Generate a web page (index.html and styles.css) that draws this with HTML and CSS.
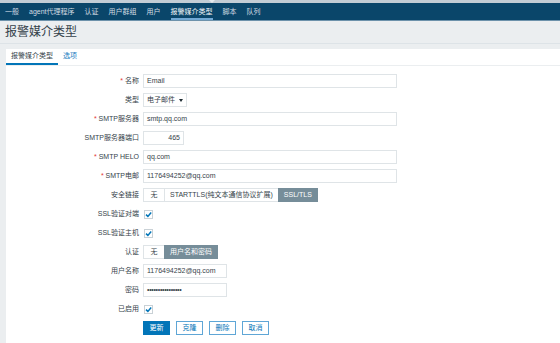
FILE: index.html
```html
<!DOCTYPE html>
<html lang="zh">
<head>
<meta charset="utf-8">
<link rel="stylesheet" href="styles.css">
</head>
<body>
<div class="topband"><span class="notch"></span></div>
<nav class="subnav">
  <span class="nav-item">一般</span>
  <span class="nav-item">agent代理程序</span>
  <span class="nav-item">认证</span>
  <span class="nav-item">用户群组</span>
  <span class="nav-item">用户</span>
  <span class="nav-item selected">报警媒介类型</span>
  <span class="nav-item">脚本</span>
  <span class="nav-item">队列</span>
</nav>
<header class="page-header"><h1 class="page-title">报警媒介类型</h1></header>
<main class="panel">
  <div class="tabs">
    <span class="tab active">报警媒介类型</span>
    <span class="tab">选项</span>
  </div>
  <div class="form">
    <div class="lbl"><span class="req">*</span> 名称</div>
    <div class="field"><div class="inp wide">Email</div></div>

    <div class="lbl">类型</div>
    <div class="field"><div class="inp select">电子邮件<span class="caret"></span></div></div>

    <div class="lbl"><span class="req">*</span> SMTP服务器</div>
    <div class="field"><div class="inp wide">smtp.qq.com</div></div>

    <div class="lbl">SMTP服务器端口</div>
    <div class="field"><div class="inp port">465</div></div>

    <div class="lbl"><span class="req">*</span> SMTP HELO</div>
    <div class="field"><div class="inp wide">qq.com</div></div>

    <div class="lbl"><span class="req">*</span> SMTP电邮</div>
    <div class="field"><div class="inp wide">1176494252@qq.com</div></div>

    <div class="lbl">安全链接</div>
    <div class="field"><div class="seg"><span class="seg-btn narrow">无</span><span class="seg-btn">STARTTLS(纯文本通信协议扩展)</span><span class="seg-btn on">SSL/TLS</span></div></div>

    <div class="lbl">SSL验证对端</div>
    <div class="field"><span class="chk"><svg viewBox="0 0 9 9" width="9" height="9"><polyline points="2,4.6 3.9,6.4 7.2,2.6" fill="none" stroke="#0275b8" stroke-width="1.5"/></svg></span></div>

    <div class="lbl">SSL验证主机</div>
    <div class="field"><span class="chk"><svg viewBox="0 0 9 9" width="9" height="9"><polyline points="2,4.6 3.9,6.4 7.2,2.6" fill="none" stroke="#0275b8" stroke-width="1.5"/></svg></span></div>

    <div class="lbl">认证</div>
    <div class="field"><div class="seg"><span class="seg-btn narrow">无</span><span class="seg-btn on">用户名和密码</span></div></div>

    <div class="lbl">用户名称</div>
    <div class="field"><div class="inp short">1176494252@qq.com</div></div>

    <div class="lbl">密码</div>
    <div class="field"><div class="inp short pw">••••••••••••••••</div></div>

    <div class="lbl">已启用</div>
    <div class="field"><span class="chk"><svg viewBox="0 0 9 9" width="9" height="9"><polyline points="2,4.6 3.9,6.4 7.2,2.6" fill="none" stroke="#0275b8" stroke-width="1.5"/></svg></span></div>

    <div class="lbl"></div>
    <div class="field buttons">
      <span class="btn primary">更新</span>
      <span class="btn">克隆</span>
      <span class="btn">删除</span>
      <span class="btn">取消</span>
    </div>
  </div>
</main>
</body>
</html>
```

FILE: styles.css
```css
* { box-sizing: border-box; }
html, body {
  margin: 0;
  padding: 0;
  background: #ebeef0;
  font-family: "Liberation Sans", "Noto Sans CJK SC", sans-serif;
  color: #36434a;
  font-size: 7px;
  overflow: hidden;
}
.topband {
  height: 3px;
  background: #c3cdd5;
  position: relative;
}
.notch {
  position: absolute;
  left: 209px;
  top: 0;
  width: 0;
  height: 0;
  border-left: 3px solid transparent;
  border-right: 3px solid transparent;
  border-top: 3px solid #e6ebee;
}
.subnav {
  display: flex;
  height: 18px;
  background: #0a466a;
  border-bottom: 1px solid #6d92ab;
}
.nav-item {
  margin: 0 5px;
  height: 17px;
  line-height: 17px;
  color: #d3dce2;
  white-space: nowrap;
}
.nav-item.selected {
  color: #f4f7f9;
  border-bottom: 2px solid #72a9d4;
}
.page-header {
  height: 23px;
  border-bottom: 1px solid #dde3e7;
}
.page-title {
  margin: 0;
  padding-left: 5px;
  font-size: 12px;
  font-weight: normal;
  line-height: 22px;
  color: #34414a;
}
.panel {
  margin: 5px 0 0 6px;
  background: #ffffff;
  height: 300px;
}
.tabs {
  display: flex;
  height: 17px;
  border-bottom: 1px solid #ebeef0;
}
.tab {
  padding: 0 5px;
  height: 16px;
  line-height: 14px;
  color: #1a80bf;
  white-space: nowrap;
}
.tab.active {
  color: #36434a;
  border-bottom: 2px solid #0275b8;
}
.form {
  display: grid;
  grid-template-columns: 133px 1fr;
  grid-auto-rows: 14px;
  column-gap: 4px;
  row-gap: 5px;
  padding-top: 8px;
}
.lbl {
  text-align: right;
  line-height: 14px;
  white-space: nowrap;
}
.req { color: #e33734; }
.field {
  display: flex;
  align-items: center;
}
.inp {
  height: 14px;
  border: 1px solid #dfe4e7;
  background: #fff;
  padding: 0 3px;
  line-height: 12px;
  white-space: nowrap;
}
.inp.wide { width: 254px; }
.inp.port { width: 41px; text-align: right; }
.inp.short { width: 84px; }
.inp.pw { letter-spacing: -0.3px; }
.inp.select {
  width: 44px;
  position: relative;
}
.caret {
  position: absolute;
  right: 3px;
  top: 5px;
  width: 0;
  height: 0;
  border-left: 2px solid transparent;
  border-right: 2px solid transparent;
  border-top: 3px solid #1f2c33;
}
.seg { display: flex; }
.seg-btn {
  height: 14px;
  line-height: 12px;
  padding: 0 5px;
  border: 1px solid #dfe4e7;
  background: #fff;
  white-space: nowrap;
  margin-right: -1px;
}
.seg-btn.narrow {
  width: 22px;
  text-align: center;
  padding: 0;
}
.seg-btn.on {
  background: #768d99;
  border-color: #768d99;
  color: #fff;
}
.chk {
  display: block;
  width: 9px;
  height: 9px;
  margin-left: 1px;
  border: 1px solid #c9d1d6;
  background: #fff;
  position: relative;
}
.chk svg {
  position: absolute;
  left: -1px;
  top: -1px;
}
.buttons { gap: 6px; }
.btn {
  height: 14px;
  line-height: 12px;
  padding: 0 5.5px;
  border: 1px solid #5fa6d6;
  color: #0275b8;
  background: #fff;
  white-space: nowrap;
}
.btn.primary {
  background: #0275b8;
  border-color: #0275b8;
  color: #fff;
}
```
